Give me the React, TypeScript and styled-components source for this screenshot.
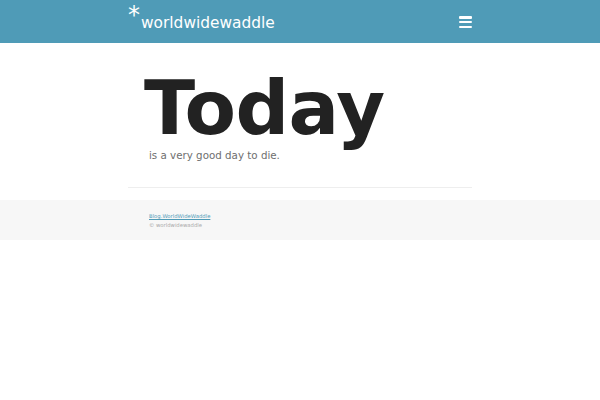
import styled, { createGlobalStyle } from 'styled-components';

const GlobalStyle = createGlobalStyle`
  html, body {
    margin: 0;
    padding: 0;
    background: #ffffff;
    font-family: "DejaVu Sans", Verdana, sans-serif;
  }
`;

const Header = styled.header`
  background: #4f9bb7;
  height: 43px;
`;

const Container = styled.div`
  width: 344px;
  margin: 0 auto;
`;

const HeaderInner = styled(Container)`
  height: 100%;
  display: flex;
  align-items: center;
  justify-content: space-between;
`;

const Brand = styled.a`
  display: flex;
  align-items: flex-start;
  color: #ffffff;
  text-decoration: none;
  font-size: 15.4px;
  line-height: 1;
  margin-top: -4px;
`;

const Star = styled.span`
  font-size: 24px;
  line-height: 1;
  margin-top: -4px;
  margin-right: 1px;
`;

const BrandText = styled.span`
  padding-top: 9px;
`;

const MenuButton = styled.button`
  background: none;
  border: 0;
  padding: 0;
  width: 13px;
  height: 12px;
  display: flex;
  flex-direction: column;
  justify-content: space-between;
  cursor: pointer;
  margin-top: 1px;

  span {
    display: block;
    height: 2.5px;
    background: #ffffff;
    border-radius: 1px;
  }
`;

const Hero = styled(Container)`
  padding: 28px 0 26px;
  border-bottom: 1px solid #eeeeee;
`;

const Title = styled.h1`
  margin: 0 0 0 16px;
  font-size: 75px;
  font-weight: bold;
  letter-spacing: -0.6px;
  line-height: 1;
  color: #222222;
`;

const Subtitle = styled.p`
  margin: 3px 0 0 21px;
  font-size: 10.3px;
  color: #6e6e6e;
  line-height: 1.2;
`;

const Footer = styled.footer`
  background: #f7f7f7;
  margin-top: 12px;
  padding: 12px 0 10px;
`;

const FooterInner = styled(Container)`
  padding-left: 21px;
  box-sizing: border-box;
  font-size: 5.3px;
  line-height: 9px;
`;

const FooterLink = styled.a`
  display: block;
  color: #4f9bb7;
  text-decoration: underline;
`;

const Copyright = styled.div`
  color: #aaaaaa;
`;

export default function App() {
  return (
    <>
      <GlobalStyle />
      <Header>
        <HeaderInner>
          <Brand href="#">
            <Star>*</Star>
            <BrandText>worldwidewaddle</BrandText>
          </Brand>
          <MenuButton aria-label="menu">
            <span />
            <span />
            <span />
          </MenuButton>
        </HeaderInner>
      </Header>
      <Hero>
        <Title>Today</Title>
        <Subtitle>is a very good day to die.</Subtitle>
      </Hero>
      <Footer>
        <FooterInner>
          <FooterLink href="#">Blog.WorldWideWaddle</FooterLink>
          <Copyright>© worldwidewaddle</Copyright>
        </FooterInner>
      </Footer>
    </>
  );
}
